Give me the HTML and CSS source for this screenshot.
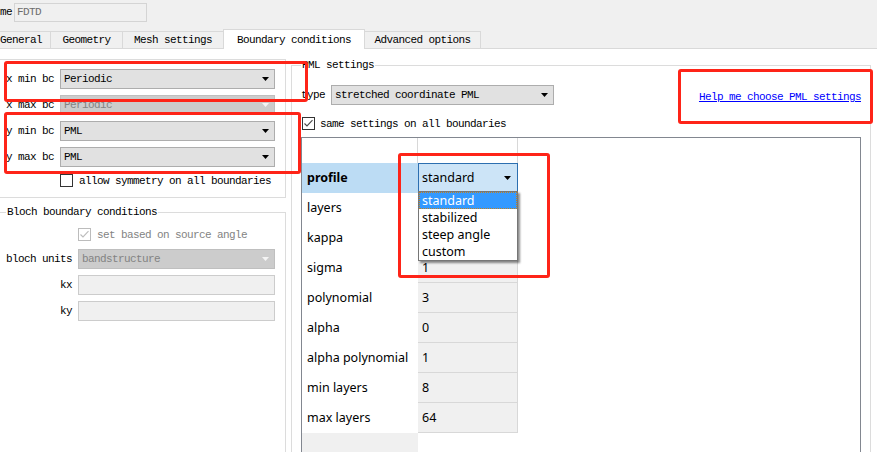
FILE: index.html
```html
<!DOCTYPE html>
<html>
<head>
<meta charset="utf-8">
<link rel="stylesheet" href="styles.css">
</head>
<body>
<div class="app">
  <div class="namebar">
    <span class="name-label">me</span>
    <div class="name-input">FDTD</div>
  </div>
  <div class="tabbar">
    <div class="tab t-general">General</div>
    <div class="tab t-geometry">Geometry</div>
    <div class="tab t-mesh">Mesh settings</div>
    <div class="tab t-boundary active">Boundary conditions</div>
    <div class="tab t-advanced">Advanced options</div>
  </div>
  <div class="pane">
    <div class="left">
      <div class="group bc-group">
        <div class="form bc-form">
          <span class="lbl">x min bc</span>
          <div class="combo"><span>Periodic</span><svg class="arrow" width="7" height="4" viewBox="0 0 7 4"><path d="M0 0H7L3.5 4Z"/></svg></div>
          <span class="lbl">x max bc</span>
          <div class="combo disabled"><span>Periodic</span><svg class="arrow" width="7" height="4" viewBox="0 0 7 4"><path d="M0 0H7L3.5 4Z"/></svg></div>
          <span class="lbl">y min bc</span>
          <div class="combo"><span>PML</span><svg class="arrow" width="7" height="4" viewBox="0 0 7 4"><path d="M0 0H7L3.5 4Z"/></svg></div>
          <span class="lbl">y max bc</span>
          <div class="combo"><span>PML</span><svg class="arrow" width="7" height="4" viewBox="0 0 7 4"><path d="M0 0H7L3.5 4Z"/></svg></div>
          <span></span>
          <div class="check-row sym-row"><span class="checkbox"></span><span>allow symmetry on all boundaries</span></div>
        </div>
      </div>
      <fieldset class="group bloch-group">
        <legend>Bloch boundary conditions</legend>
        <div class="form bloch-form">
          <span></span>
          <div class="check-row disabled src-row"><span class="checkbox checked"><svg width="11" height="11" viewBox="0 0 11 11"><path d="M1.5 5.5L4 8L9.5 2.2"/></svg></span><span>set based on source angle</span></div>
          <span class="lbl">bloch units</span>
          <div class="combo disabled"><span>bandstructure</span><svg class="arrow" width="7" height="4" viewBox="0 0 7 4"><path d="M0 0H7L3.5 4Z"/></svg></div>
          <span class="lbl">kx</span>
          <div class="line-edit"></div>
          <span class="lbl">ky</span>
          <div class="line-edit"></div>
        </div>
      </fieldset>
    </div>
    <fieldset class="group pml-group">
      <legend>PML settings</legend>
      <div class="pml-top">
        <div class="pml-controls">
          <div class="type-row">
            <span class="type-lbl">type</span>
            <div class="combo type-combo"><span>stretched coordinate PML</span><svg class="arrow" width="7" height="4" viewBox="0 0 7 4"><path d="M0 0H7L3.5 4Z"/></svg></div>
          </div>
          <div class="check-row same-row"><span class="checkbox checked"><svg width="11" height="11" viewBox="0 0 11 11"><path d="M1.5 5.5L4 8L9.5 2.2"/></svg></span><span>same settings on all boundaries</span></div>
        </div>
        <a class="help-link" href="#">Help me choose PML settings</a>
      </div>
      <div class="prop-table">
        <div class="prop-cols">
          <div class="prop-head"><div class="cell-l"></div><div class="cell-v"></div></div>
          <div class="prop-row profile-row">
            <div class="cell-l">profile</div>
            <div class="cell-v profile-cell">
              <div class="profile-combo"><span>standard</span><svg class="arrow" width="7" height="4" viewBox="0 0 7 4"><path d="M0 0H7L3.5 4Z"/></svg></div>
              <ul class="dropdown">
                <li class="current">standard</li>
                <li>stabilized</li>
                <li>steep angle</li>
                <li>custom</li>
              </ul>
            </div>
          </div>
          <div class="prop-row"><div class="cell-l">layers</div><div class="cell-v"></div></div>
          <div class="prop-row"><div class="cell-l">kappa</div><div class="cell-v"></div></div>
          <div class="prop-row"><div class="cell-l">sigma</div><div class="cell-v">1</div></div>
          <div class="prop-row"><div class="cell-l">polynomial</div><div class="cell-v">3</div></div>
          <div class="prop-row"><div class="cell-l">alpha</div><div class="cell-v">0</div></div>
          <div class="prop-row"><div class="cell-l">alpha polynomial</div><div class="cell-v">1</div></div>
          <div class="prop-row"><div class="cell-l">min layers</div><div class="cell-v">8</div></div>
          <div class="prop-row"><div class="cell-l">max layers</div><div class="cell-v">64</div></div>
          <div class="prop-fill"><div class="cell-l"></div><div class="cell-v"></div></div>
        </div>
      </div>
    </fieldset>
  </div>
  <div class="mark m1"></div>
  <div class="mark m2"></div>
  <div class="mark m3"></div>
  <div class="mark m4"></div>
</div>
</body>
</html>
```

FILE: styles.css
```css
* { box-sizing: border-box; }
html, body { margin: 0; padding: 0; }
body {
  width: 877px;
  height: 452px;
  overflow: hidden;
  background: #f0f0f0;
  font-family: "Liberation Mono", "DejaVu Sans Mono", monospace;
  font-size: 11px;
  letter-spacing: -0.6px;
  color: #000;
}
.app { position: relative; width: 877px; height: 452px; overflow: hidden; }

/* name bar */
.namebar { height: 29px; display: flex; align-items: flex-start; }
.name-label { margin-left: 0; margin-top: 6px; line-height: 13px; width: 11px; flex: none; white-space: nowrap; }
.name-input {
  margin-left: 3px; margin-top: 3px;
  width: 133px; height: 19px;
  border: 1px solid #d4d4d4;
  background: #f0f0f0;
  color: #6d6d6d;
  padding-left: 2px;
  line-height: 17px;
}

/* tabs */
.tabbar { height: 19px; display: flex; align-items: flex-end; position: relative; z-index: 2; }
.tab {
  height: 17px;
  border: 1px solid #d9d9d9;
  border-bottom: none;
  margin-left: -1px;
  background: #f0f0f0;
  text-align: center;
  line-height: 16px;
  white-space: nowrap;
  flex: none;
}
.t-general { width: 60px; margin-left: -9px; }
.t-geometry { width: 73px; }
.t-mesh { width: 102px; }
.t-boundary { width: 142px; }
.t-advanced { width: 117px; }
.tab.active { height: 20px; margin-bottom: -1px; background: #fff; padding-top: 2px; }

/* pane */
.pane {
  height: 404px;
  border-top: 1px solid #d9d9d9;
  background: #fff;
  display: flex;
  align-items: flex-start;
  padding-top: 10px;
}
.left { width: 292px; margin-left: -6px; flex: none; }
.group { border: 1px solid #dcdcdc; margin: 0; min-width: 0; }
.bc-group { padding: 9px 9px 10px 0; }
.form { display: grid; column-gap: 6px; row-gap: 6px; align-items: center; }
.bc-form { grid-template-columns: 59px 215px; }
.bloch-form { grid-template-columns: 77px 197px; }
.lbl { text-align: right; white-space: nowrap; line-height: 13px; }

fieldset.group legend { padding: 0 1px; line-height: 13px; white-space: nowrap; }
.bloch-group { margin-top: 8px; padding: 9px 0 40px 0; height: 320px; }
.bloch-group legend { margin-left: 11px; }

.combo {
  height: 20px;
  border: 1px solid #adadad;
  background: #e1e1e1;
  display: flex;
  align-items: center;
  justify-content: space-between;
  padding: 0 5px 0 3px;
  white-space: nowrap;
}
.combo .arrow { fill: #000; flex: none; }
.combo.disabled { background: #cccccc; border-color: #bfbfbf; color: #838383; }
.combo.disabled .arrow { fill: #f4f4f4; }

.line-edit { height: 20px; border: 1px solid #cccccc; background: #f0f0f0; }

.check-row { display: flex; align-items: center; height: 13px; white-space: nowrap; }
.checkbox {
  width: 13px; height: 13px; flex: none;
  border: 1px solid #333;
  background: #fff;
  margin-right: 6px;
  display: flex; align-items: center; justify-content: center;
}
.checkbox svg path { fill: none; stroke: #4a4a4a; stroke-width: 1.1; }
.sym-row { margin-top: 1px; }
.src-row { margin-bottom: 2px; }
.check-row.disabled { color: #838383; }
.check-row.disabled .checkbox { border-color: #bcbcbc; }
.check-row.disabled .checkbox svg path { stroke: #bcbcbc; }

/* PML group */
.pml-group { width: 580px; margin-left: 5px; padding: 0 9px; height: 420px; flex: none; }
.pml-top { display: flex; justify-content: space-between; align-items: flex-start; }
.pml-controls { margin-top: 13px; }
.type-row { display: flex; align-items: center; gap: 6px; }
.type-lbl { width: 24px; }
.type-combo { width: 223px; }
.same-row { margin-top: 12px; }
.same-row .checkbox { margin-left: 1px; margin-right: 5px; }
.help-link { margin-top: 18px; line-height: 14px; color: #0000ff; text-decoration: underline; white-space: nowrap; }

/* property table */
.prop-table {
  margin-top: 7px;
  border: 1px solid #828790;
  border-bottom: none;
  height: 330px;
  background: #fff;
  font-family: "Noto Sans", "Open Sans", sans-serif;
  font-size: 12.5px;
  letter-spacing: 0;
}
.prop-cols { width: 216px; }
.prop-head { display: flex; height: 25px; }
.prop-head .cell-l { width: 116px; border-right: 1px solid #d8d8d8; }
.prop-head .cell-v { width: 100px; border-right: 1px solid #d8d8d8; }
.prop-row { display: flex; height: 30px; }
.prop-row .cell-l { width: 116px; padding-left: 5px; line-height: 30px; white-space: nowrap; }
.prop-row .cell-v {
  width: 100px;
  background: #f0f0f0;
  border-right: 1px solid #d8d8d8;
  border-bottom: 1px solid #d8d8d8;
  padding-left: 4px;
  line-height: 29px;
}
.profile-row .cell-l { background: #bcdcf4; font-weight: bold; }
.prop-row .profile-cell { position: relative; background: #fff; border: none; padding: 0; }
.profile-combo {
  height: 29px;
  border: 1px solid #2c6fb0;
  background: #cce4f7;
  display: flex;
  align-items: center;
  justify-content: space-between;
  padding: 0 6px 0 3px;
  line-height: 27px;
}
.profile-combo .arrow { fill: #000; }
.dropdown {
  position: absolute;
  top: 28px; left: 0;
  width: 100px;
  margin: 0; padding: 0;
  list-style: none;
  background: #fff;
  border: 1px solid #767676;
  box-shadow: 2px 2px 2px rgba(0, 0, 0, 0.45);
  z-index: 3;
}
.dropdown li { height: 17px; line-height: 17px; padding-left: 3px; white-space: nowrap; }
.dropdown li.current { background: #3399ff; color: #fff; outline: 1px dotted #c4801c; outline-offset: -1px; }
.prop-fill { display: flex; height: 40px; }
.prop-fill .cell-l { width: 116px; background: #f0f0f0; }

/* annotation marks */
.mark { position: absolute; border: 3px solid #fe2418; border-radius: 3px; z-index: 5; }
.m1 { left: 4px; top: 61px; width: 304px; height: 41px; }
.m2 { left: 4px; top: 112px; width: 297px; height: 62px; }
.m3 { left: 678px; top: 69px; width: 195px; height: 55px; }
.m4 { left: 398px; top: 153px; width: 152px; height: 125px; }
```
